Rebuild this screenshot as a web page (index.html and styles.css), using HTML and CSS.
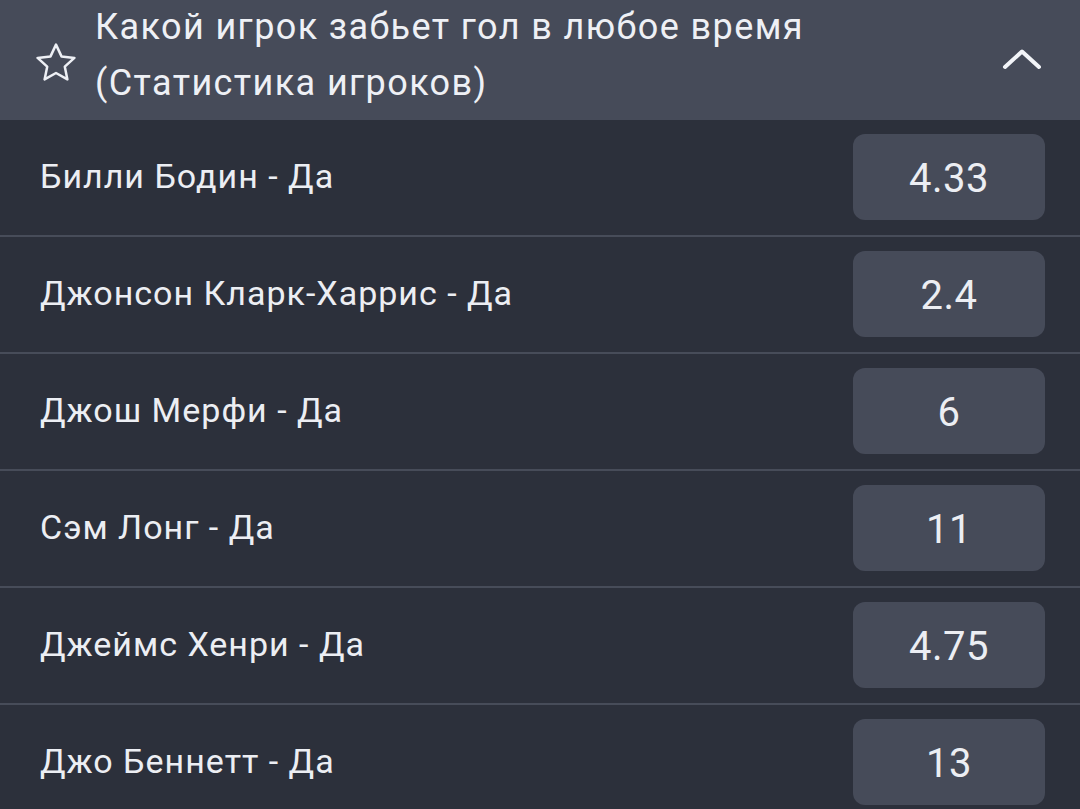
FILE: index.html
```html
<!DOCTYPE html>
<html lang="ru">
<head>
<meta charset="utf-8">
<link rel="stylesheet" href="styles.css">
</head>
<body>
<div class="market">
  <div class="market-head">
    <svg class="star" viewBox="2 2 20 19" width="40" height="38"><path d="M12 2.8l2.75 5.9 6.45.75-4.8 4.4 1.3 6.35L12 17l-5.7 3.2 1.3-6.35-4.8-4.4 6.45-.75z" fill="none" stroke="#eef0f5" stroke-width="1.25" stroke-linejoin="round"/></svg>
    <div class="title">Какой игрок забьет гол в любое время<br>(Статистика игроков)</div>
    <svg class="chevron" viewBox="0 0 40 24" width="40" height="24"><path d="M3 20L20 4.5l17 15.5" fill="none" stroke="#f2f4f8" stroke-width="4" stroke-linecap="round" stroke-linejoin="round"/></svg>
  </div>
  <div class="rows">
    <div class="row"><span class="name">Билли Бодин - Да</span><span class="odd">4.33</span></div>
    <div class="row"><span class="name">Джонсон Кларк-Харрис - Да</span><span class="odd">2.4</span></div>
    <div class="row"><span class="name">Джош Мерфи - Да</span><span class="odd">6</span></div>
    <div class="row"><span class="name">Сэм Лонг - Да</span><span class="odd">11</span></div>
    <div class="row"><span class="name">Джеймс Хенри - Да</span><span class="odd">4.75</span></div>
    <div class="row"><span class="name">Джо Беннетт - Да</span><span class="odd">13</span></div>
  </div>
</div>
</body>
</html>
```
FILE: styles.css
```css
html, body {
  margin: 0;
  padding: 0;
  background: #2c303b;
}
body {
  font-family: Roboto, "Noto Sans", sans-serif;
  color: #eceef3;
  width: 1080px;
  height: 809px;
  overflow: hidden;
}
.market-head {
  height: 120px;
  background: #464b59;
  display: flex;
  align-items: center;
  box-sizing: border-box;
  padding: 0 38px 0 36px;
}
.star {
  flex: none;
  margin-top: 4px;
}
.title {
  flex: 1;
  margin-left: 19px;
  font-size: 36px;
  letter-spacing: 1.4px;
  line-height: 56px;
  margin-bottom: 10px;
  color: #eef0f5;
}
.chevron {
  flex: none;
  margin-top: -2px;
}
.row {
  height: 115px;
  border-bottom: 2px solid #474c59;
  display: flex;
  align-items: center;
  justify-content: space-between;
  padding: 0 35px 0 40px;
}
.name {
  font-size: 34px;
  letter-spacing: 1px;
  margin-bottom: 4px;
  color: #eceef3;
}
.odd {
  width: 192px;
  height: 86px;
  box-sizing: border-box;
  padding-top: 3px;
  border-radius: 12px;
  background: #464b59;
  display: flex;
  align-items: center;
  justify-content: center;
  font-size: 40px;
  letter-spacing: 0.5px;
  color: #eceef3;
  margin-top: -1px;
}
```
